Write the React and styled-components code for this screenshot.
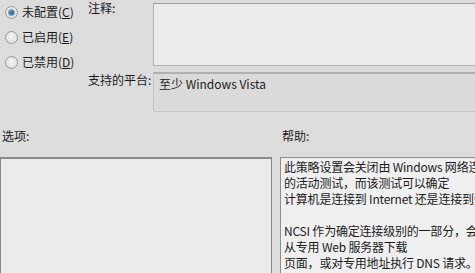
import React from "react";
import styled, { createGlobalStyle } from "styled-components";

const GlobalStyle = createGlobalStyle`
  html, body {
    margin: 0;
    padding: 0;
    background: #dcdcdc;
    overflow: hidden;
  }
  body {
    font-family: "Noto Sans CJK SC", "Microsoft YaHei", sans-serif;
    font-size: 12px;
    color: #1b1b1b;
  }
`;

const Page = styled.div`
  width: 475px;
  height: 273px;
  overflow: hidden;
  display: flex;
  flex-direction: column;
`;

const Top = styled.div`
  display: flex;
  height: 112px;
`;

const RadioGroup = styled.div`
  width: 88px;
  display: flex;
  flex-direction: column;
  gap: 9px;
  padding: 4px 0 0 5px;
  box-sizing: border-box;
`;

const RadioRow = styled.label`
  display: flex;
  align-items: center;
  gap: 4px;
  height: 16px;
  line-height: 16px;
  white-space: nowrap;
`;

const Circle = styled.span`
  width: 11px;
  height: 11px;
  border-radius: 50%;
  border: 1px solid #9a9a9a;
  background: radial-gradient(circle at 50% 40%, #f6f6f6 0%, #d6d6d6 100%);
  display: flex;
  align-items: center;
  justify-content: center;

  &::after {
    content: "";
    width: 5px;
    height: 5px;
    border-radius: 50%;
    display: ${(p) => (p.checked ? "block" : "none")};
    background: radial-gradient(circle at 40% 35%, #4d8fc0 0%, #1d4f7c 100%);
    box-shadow: 0 0 0 1px #7ea8c9;
  }
`;

const FieldGrid = styled.div`
  flex: 1;
  display: grid;
  grid-template-columns: 65px 1fr;
  grid-template-rows: 66px 40px;
  row-gap: 6px;
`;

const FieldLabel = styled.div`
  line-height: 16px;
`;

/* boxes run past the right edge, like the cropped dialog */
const CommentBox = styled.div`
  margin-top: 3px;
  margin-right: -4px;
  background: #ebebeb;
  border: 1px solid #b4b4b4;
  border-top-color: #9c9c9c;
`;

const PlatformBox = styled.div`
  margin-right: -4px;
  background: #dadada;
  border: 1px solid #c6c6c6;
  border-top: 2px solid #b0b0b0;
  padding: 2px 5px;
  line-height: 16px;
`;

const LabelRow = styled.div`
  display: grid;
  grid-template-columns: 280px 1fr;
  height: 45px;
  align-items: center;
`;

const SectionLabel = styled.div`
  padding-left: ${(p) => p.indent}px;
  line-height: 16px;
  margin-top: 2px;
`;

const Panes = styled.div`
  flex: 1;
  display: grid;
  grid-template-columns: 272px 1fr;
  column-gap: 8px;
  margin-right: -4px;
`;

const OptionsPane = styled.div`
  background: #ebebeb;
  border: 1px solid #8a8a8a;
  border-top-width: 2px;
  border-bottom: none;
`;

const HelpPane = styled.div`
  background: #efefef;
  border: 1px solid #8e8e8e;
  border-bottom: none;
  padding: 1px 3px;
  line-height: 16px;
  letter-spacing: -0.2px;
  white-space: nowrap;
  overflow: hidden;
`;

const HelpLine = styled.div`
  height: 16px;
`;

const radios = [
  { text: "未配置", key: "C", checked: true },
  { text: "已启用", key: "E" },
  { text: "已禁用", key: "D" },
];

const helpLines = [
  "此策略设置会关闭由 Windows 网络连接",
  "的活动测试，而该测试可以确定",
  "计算机是连接到 Internet 还是连接到受",
  "",
  "NCSI 作为确定连接级别的一部分，会执",
  "从专用 Web 服务器下载",
  "页面，或对专用地址执行 DNS 请求。",
];

export default function App() {
  return (
    <Page>
      <GlobalStyle />
      <Top>
        <RadioGroup>
          {radios.map((r) => (
            <RadioRow key={r.key}>
              <Circle checked={r.checked} />
              <span>
                {r.text}(<u>{r.key}</u>)
              </span>
            </RadioRow>
          ))}
        </RadioGroup>
        <FieldGrid>
          <FieldLabel>注释:</FieldLabel>
          <CommentBox />
          <FieldLabel>支持的平台:</FieldLabel>
          <PlatformBox>至少 Windows Vista</PlatformBox>
        </FieldGrid>
      </Top>
      <LabelRow>
        <SectionLabel indent={2}>选项:</SectionLabel>
        <SectionLabel indent={2}>帮助:</SectionLabel>
      </LabelRow>
      <Panes>
        <OptionsPane />
        <HelpPane>
          {helpLines.map((l, i) => (
            <HelpLine key={i}>{l}</HelpLine>
          ))}
        </HelpPane>
      </Panes>
    </Page>
  );
}
